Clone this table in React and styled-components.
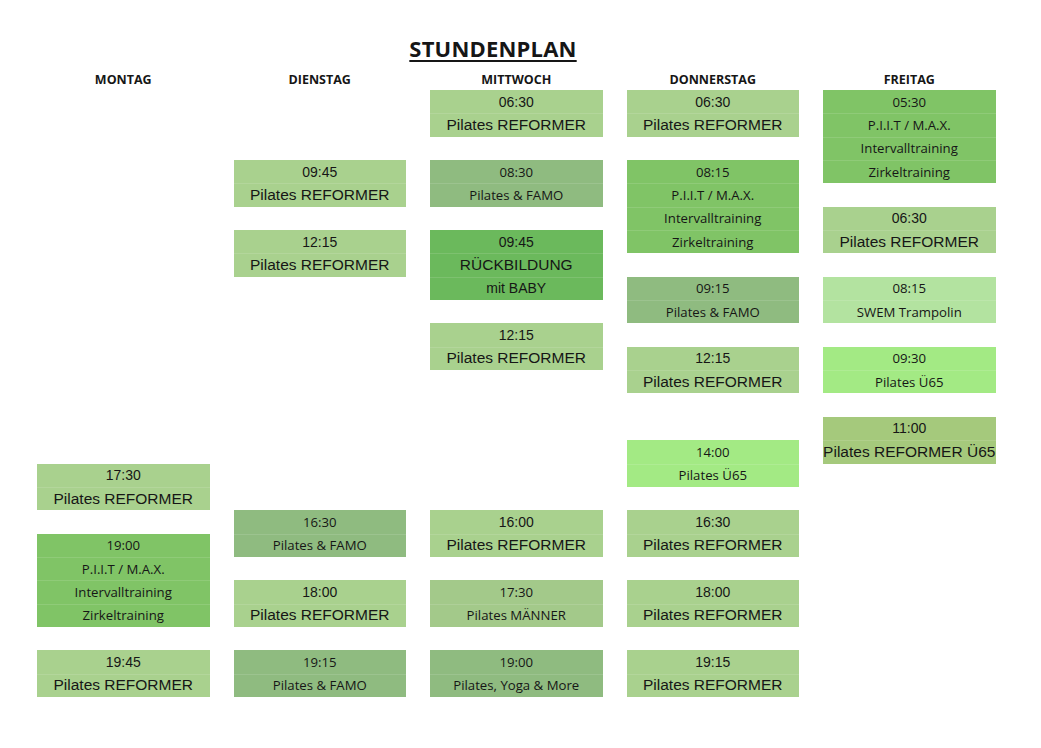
import React from 'react';
import styled, { createGlobalStyle } from 'styled-components';

const GlobalStyle = createGlobalStyle`
  body {
    margin: 0;
    background: #ffffff;
    color: #161616;
    font-family: "Open Sans", "Liberation Sans", sans-serif;
  }
`;

const ROW = 23.35;

// colours of the sheet
const C = {
  reformer: '#a9d18e',
  famo: '#8fbb80',
  piit: '#80c466',
  baby: '#6bb95c',
  maenner: '#a3c98a',
  swem: '#b3e3a0',
  ue65: '#a3ea84',
  reformerUe65: '#a5c97c',
};

const reformer = (time) => ({ arial: true, color: C.reformer, lines: [time, 'Pilates REFORMER'] });
const famo = (time) => ({ color: C.famo, lines: [time, 'Pilates & FAMO'] });
const piit = (time) => ({ color: C.piit, lines: [time, 'P.I.I.T / M.A.X.', 'Intervalltraining', 'Zirkeltraining'] });

const days = [
  {
    name: 'MONTAG',
    blocks: [
      { row: 16, ...reformer('17:30') },
      { row: 19, ...piit('19:00') },
      { row: 24, ...reformer('19:45') },
    ],
  },
  {
    name: 'DIENSTAG',
    blocks: [
      { row: 3, ...reformer('09:45') },
      { row: 6, ...reformer('12:15') },
      { row: 18, ...famo('16:30') },
      { row: 21, ...reformer('18:00') },
      { row: 24, ...famo('19:15') },
    ],
  },
  {
    name: 'MITTWOCH',
    blocks: [
      { row: 0, ...reformer('06:30') },
      { row: 3, ...famo('08:30') },
      { row: 6, arial: true, color: C.baby, lines: ['09:45', 'RÜCKBILDUNG', 'mit BABY'] },
      { row: 10, ...reformer('12:15') },
      { row: 18, ...reformer('16:00') },
      { row: 21, color: C.maenner, lines: ['17:30', 'Pilates MÄNNER'] },
      { row: 24, color: C.famo, lines: ['19:00', 'Pilates, Yoga & More'] },
    ],
  },
  {
    name: 'DONNERSTAG',
    blocks: [
      { row: 0, ...reformer('06:30') },
      { row: 3, ...piit('08:15') },
      { row: 8, ...famo('09:15') },
      { row: 11, ...reformer('12:15') },
      { row: 15, color: C.ue65, lines: ['14:00', 'Pilates Ü65'] },
      { row: 18, ...reformer('16:30') },
      { row: 21, ...reformer('18:00') },
      { row: 24, ...reformer('19:15') },
    ],
  },
  {
    name: 'FREITAG',
    blocks: [
      { row: 0, ...piit('05:30') },
      { row: 5, ...reformer('06:30') },
      { row: 8, color: C.swem, lines: ['08:15', 'SWEM Trampolin'] },
      { row: 11, color: C.ue65, lines: ['09:30', 'Pilates Ü65'] },
      { row: 14, arial: true, color: C.reformerUe65, lines: ['11:00', 'Pilates REFORMER Ü65'] },
    ],
  },
];

const Page = styled.div`
  padding: 34px 0 0 37px;
`;

const Title = styled.h1`
  margin: 0;
  width: 958px;
  padding-right: 46px;
  box-sizing: border-box;
  text-align: center;
  font-size: 22px;
  line-height: 28px;
  font-weight: 700;
  letter-spacing: 0.2px;
  text-decoration: underline;
  text-decoration-thickness: 2px;
  text-underline-offset: 3px;
`;

const Columns = styled.div`
  display: grid;
  grid-template-columns: repeat(5, 172.5px);
  column-gap: 24px;
`;

const DayHead = styled.div`
  margin-top: 8px;
  height: 20px;
  text-align: center;
  font-size: 12.5px;
  font-weight: 700;
  line-height: 20px;
`;

const Sheet = styled(Columns)`
  grid-template-rows: repeat(26, ${ROW}px);
`;

const Block = styled.div`
  display: flex;
  flex-direction: column;
  background: ${(p) => p.$color};
  font-family: ${(p) => (p.$arial ? '"Liberation Sans", Arial, sans-serif' : '"Open Sans", sans-serif')};
`;

const Line = styled.div`
  height: ${ROW}px;
  display: flex;
  align-items: center;
  justify-content: center;
  white-space: nowrap;
  font-size: ${(p) => (p.$big ? '15.5px' : p.$arial ? '14px' : '13.2px')};
  font-weight: ${(p) => (p.$arial ? 400 : 500)};
  & + & {
    box-shadow: inset 0 1px 0 rgba(255, 255, 255, 0.12);
  }
`;

export default function App() {
  return (
    <Page>
      <GlobalStyle />
      <Title>STUNDENPLAN</Title>
      <Columns>
        {days.map((d) => <DayHead key={d.name}>{d.name}</DayHead>)}
      </Columns>
      <Sheet>
        {days.map((d, col) =>
          d.blocks.map((b) => (
            <Block
              key={d.name + b.row}
              $color={b.color}
              $arial={b.arial}
              style={{ gridColumn: col + 1, gridRow: `${b.row + 1} / span ${b.lines.length}` }}
            >
              {b.lines.map((text, i) => (
                <Line key={i} $arial={b.arial} $big={b.arial && i === 1}>{text}</Line>
              ))}
            </Block>
          ))
        )}
      </Sheet>
    </Page>
  );
}
